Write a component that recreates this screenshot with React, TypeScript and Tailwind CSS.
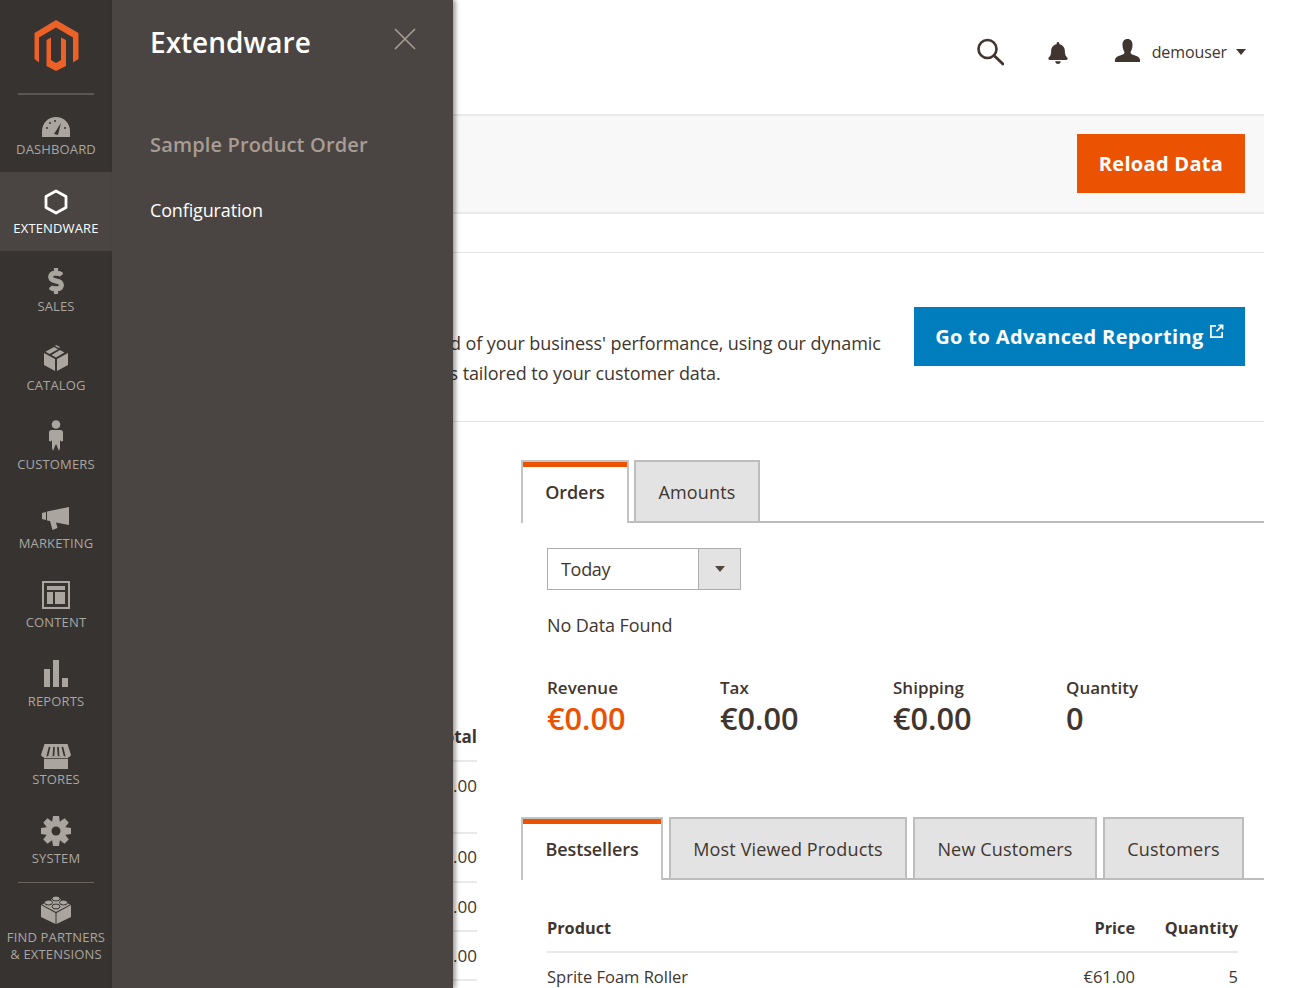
import React from "react";
import { FaDollarSign, FaBell } from "react-icons/fa";

const I = "#aaa69f";

function Item({ icon, label, active }: { icon: React.ReactNode; label: React.ReactNode; active?: boolean }) {
  return (
    <div className={`flex h-[78.8px] flex-col items-center ${active ? "bg-[#4a4542] text-white" : "text-[#aaa6a0]"}`}>
      <div className="flex h-[47.5px] w-full items-end justify-center pb-[2px]">{icon}</div>
      <div className="text-center text-[13px] leading-[17px] tracking-[0.15px] uppercase">{label}</div>
    </div>
  );
}

function Tab({ label, active, w }: { label: string; active?: boolean; w: string }) {
  return active ? (
    <div className={`relative z-10 -mb-[2px] flex h-[63px] flex-col border-x-2 border-t-2 border-[#c4c4c4] bg-white ${w}`}>
      <div className="h-[5px] bg-[#eb5202]" />
      <div className="flex flex-1 items-center justify-center pb-[5px] text-[18px] font-semibold tracking-[-0.1px]">{label}</div>
    </div>
  ) : (
    <div className={`flex h-[61px] items-center justify-center border-2 border-b-0 border-[#bdbdbd] bg-[#e3e3e3] pt-[1px] text-[18px] tracking-[0.15px] ${w}`}>{label}</div>
  );
}

function Stat({ label, value, orange }: { label: string; value: string; orange?: boolean }) {
  return (
    <div className="w-[173px]">
      <div className="text-[17px] leading-[24px] font-semibold">{label}</div>
      <div className={`-mt-[1px] text-[30.700px] leading-[38px] font-semibold ${orange ? "text-[#eb5202]" : ""}`}>{value}</div>
    </div>
  );
}

export default function App() {
  const rows = [
    ["h-[72px] pt-[11px]", "Veronica Costello", "1", "€61.00"],
    ["h-[49px] pt-[10px]", "Roni Cost", "2", "€40.00"],
    ["h-[49px] pt-[11px]", "John Smith", "1", "€22.00"],
    ["h-[49px] pt-[11px]", "Jane Doe", "1", "€36.00"],
  ];
  const teeth = [0, 45, 90, 135, 180, 225, 270, 315];
  return (
    <div className="relative flex h-[988px] w-[1300px] overflow-hidden bg-white text-[#41362f]" style={{ fontFamily: '"Open Sans", sans-serif' }}>
      {/* Sidebar */}
      <nav className="w-[112px] shrink-0 bg-[#373330]">
        <div className="flex h-[93px] flex-col items-center pt-[20px]">
          <svg width="45" height="51" viewBox="0 0 45 51" fill="#ec6125" className="ml-[1px]">
            <path d="M22 0 44.500 13V39L39 42.500V17.500L22 7.500 5 17.500V42.500L0.500 39V13Z" />
            <path d="M12.500 20 17 17.500V40L22 43 27 40V17.500L32 20V46L22 51 12.500 46Z" />
          </svg>
        </div>
        <div className="mx-[18px] h-[2px] bg-[#5a5652]" />
        <div className="-mt-[1.500px]">
          <Item
            label="Dashboard"
            icon={
              <svg width="28" height="20" viewBox="0 0 28 20" className="mb-[2px]">
                <path d="M0 20V14C0 6 6.500 0 14 0S28 6 28 14V20Z" fill={I} />
                <path d="M12 17 19 6 16 18Z" fill="#373330" />
                <g fill="#373330"><circle cx="5" cy="11" r="1" /><circle cx="8" cy="6" r="1" /><circle cx="13" cy="4" r="1" /><circle cx="23" cy="11" r="1" /></g>
              </svg>
            }
          />
          <Item
            active
            label={<span className="font-medium text-[#ffffff]">Extendware</span>}
            icon={
              <svg width="24" height="26" viewBox="0 0 24 26" className="mb-[3px]">
                <path d="M12 2 22 7.500V18.500L12 24 2 18.500V7.500Z" fill="none" stroke="#fff" strokeWidth="2.800" strokeLinejoin="round" />
              </svg>
            }
          />
          <Item
            label={<span className="-mt-[1px] block">Sales</span>}
            icon={<FaDollarSign size={26} color={I} stroke={I} strokeWidth={20} className="mb-[3px]" />}
          />
          <Item
            label="Catalog"
            icon={
              <svg width="24" height="26" viewBox="0 0 24 26" className="mb-[4px]">
                <path d="M0 8 11 14V26L0 20Z" fill={I} />
                <path d="M24 8 13 14V26L24 20Z" fill={I} />
                <path d="M12 12.500 7.500 10 16 5 20.500 7.500Z" fill={I} />
                <path d="M5.500 9 1.500 6.800 10 2 14 4.200Z" fill={I} />
                <path d="M12 0 16 2 14.800 3 11 1Z" fill={I} />
              </svg>
            }
          />
          <Item
            label="Customers"
            icon={
              <svg width="14" height="31" viewBox="0 0 14 31" className="mb-[3px]">
                <circle cx="7" cy="4.500" r="4.300" fill={I} />
                <path d="M2.500 10H11.500C13 10 14 11 14 12.500V21L12 21.500 11 20V28L10 31 7.500 25 7 24 6 26 4 31 3 28V20L2 21.500 0 21V12.500C0 11 1 10 2.500 10Z" fill={I} />
              </svg>
            }
          />
          <Item
            label="Marketing"
            icon={
              <svg width="28" height="23" viewBox="0 0 28 23" className="mb-[3px]">
                <path d="M0 6 4 5V13L0 12Z" fill={I} />
                <path d="M5 4.500 27 0V18L14 15.500 15.500 21 10.500 23 8 14 5 13.500Z" fill={I} />
              </svg>
            }
          />
          <Item
            label="Content"
            icon={
              <svg width="28" height="28" viewBox="0 0 28 28" className="mb-[3px]">
                <rect x="1" y="1" width="26" height="26" fill="none" stroke={I} strokeWidth="2" />
                <rect x="5" y="5" width="18" height="4" fill={I} />
                <rect x="5" y="11" width="6" height="12" fill={I} />
                <rect x="13" y="11" width="10" height="12" fill={I} />
              </svg>
            }
          />
          <Item
            label="Reports"
            icon={
              <svg width="24" height="27" viewBox="0 0 24 27" className="mb-[4px]">
                <rect x="0" y="9" width="6" height="18" fill={I} />
                <rect x="9" y="0" width="6" height="27" fill={I} />
                <rect x="18" y="18" width="6" height="9" fill={I} />
              </svg>
            }
          />
          <Item
            label="Stores"
            icon={
              <svg width="30" height="25" viewBox="0 0 30 25">
                <path d="M3 13H27V25H3Z" fill={I} />
                <path d="M3.500 0H26.500L30 11C29 13.500 26 14 24.500 12.500 23 14 20.500 14 19.500 12.500 18 14 16 14 15 12.500 14 14 12 14 10.500 12.500 9.500 14 7 14 5.500 12.500 4 14 1 13.500 0 11Z" fill={I} />
                <g stroke="#373330" strokeWidth="1.700" strokeLinecap="round">
                  <path d="M8.500 3.500 6.500 11.500" />
                  <path d="M13 3.500 12.500 11.500" />
                  <path d="M17 3.500 17.500 11.500" />
                  <path d="M21.500 3.500 23.500 11.500" />
                </g>
                <path d="M3 14.500H27" stroke="#373330" strokeWidth="0.800" />
              </svg>
            }
          />
          <Item
            label="System"
            icon={
              <svg width="30" height="30" viewBox="0 0 30 30" className="mb-[2px]">
                <g fill={I}>
                  {teeth.map((a) => (
                    <path key={a} d="M12 0H18L19 7H11Z" transform={`rotate(${a} 15 15)`} />
                  ))}
                </g>
                <circle cx="15" cy="15" r="9.500" fill={I} />
                <circle cx="15" cy="15" r="4.500" fill="#373330" />
              </svg>
            }
          />
        </div>
        <div className="mx-[18px] mt-[1px] h-[1px] bg-[#6b645e]" />
        <div className="flex flex-col items-center text-[#aaa6a0]">
          <svg width="30" height="29" viewBox="0 0 30 29" className="mt-[12px]">
            <path d="M0 10 14.500 18V29L0 22Z" fill={I} />
            <path d="M30 10 15.500 18V29L30 22Z" fill={I} />
            <path d="M15 2 29 9.500 15 17 1 9.500Z" fill={I} />
            <g fill={I} stroke="#373330" strokeWidth="1">
              <ellipse cx="15" cy="3.500" rx="4" ry="2.500" />
              <ellipse cx="7.500" cy="7.500" rx="4" ry="2.500" />
              <ellipse cx="22.500" cy="7.500" rx="4" ry="2.500" />
              <ellipse cx="15" cy="11.500" rx="4" ry="2.500" />
            </g>
          </svg>
          <div className="mt-[5px] text-center text-[13px] leading-[17px] tracking-[0.15px] uppercase">Find Partners<br />&amp; Extensions</div>
        </div>
      </nav>

      {/* Main */}
      <main className="w-[1152px] shrink-0">
        <header className="flex h-[114px] items-center justify-end pr-[18px] pb-[11px]">
          <svg width="28" height="28" viewBox="0 0 28 28" className="mr-[43px]" fill="none" stroke="#41362f" strokeWidth="2.600">
            <circle cx="11.500" cy="11" r="9" />
            <path d="M18 17.500 27 26" strokeLinecap="round" strokeWidth="3" />
          </svg>
          <FaBell size={22} color="#41362f" className="mr-[46px] mt-[2px]" />
          <svg width="25" height="23" viewBox="0 0 25 23" className="mr-[12px] mb-[2px]" fill="#41362f">
            <path d="M12.500 0C16 0 17.500 2.500 17.500 6 17.500 9 16.500 11.500 15.500 13 15.500 15 17 15.500 20 16.500 23 17.500 25 18.500 25 21V23H0V21C0 18.500 2 17.500 5 16.500 8 15.500 9.500 15 9.500 13 8.500 11.500 7.500 9 7.500 6 7.500 2.500 9 0 12.500 0Z" />
          </svg>
          <span className="mr-[9px] text-[16px] tracking-[-0.1px]">demouser</span>
          <svg width="10" height="6" viewBox="0 0 10 6" fill="#41362f" className="mt-[1px]"><path d="M0 0H10L5 6Z" /></svg>
        </header>

        <div className="flex h-[100px] items-center justify-end border-y-2 border-[#e9e9e9] bg-[#f8f8f8] pr-[19px] pb-[1px]">
          <div className="flex h-[59px] w-[168px] items-center justify-center bg-[#eb5202] text-[20px] font-bold tracking-[0.3px] text-white">Reload Data</div>
        </div>

        <div className="h-[39px] border-b border-[#e3e3e3]" />

        <section className="flex h-[169px] items-start justify-between border-b border-[#e3e3e3] pr-[19px] pl-[30px]">
          <div className="pt-[75px] text-[18px] leading-[30px] tracking-[-0.09px] whitespace-nowrap">
            <div className="ml-[7.500px]">Gain new insights and take command of your business' performance, using our dynamic</div>
            <div className="ml-[5px]">product, order, and customer reports tailored to your customer data.</div>
          </div>
          <div className="mt-[54px] flex h-[59px] w-[331px] shrink-0 items-center justify-center gap-[6px] bg-[#007dbd] text-[20px] font-bold tracking-[0.37px] text-white">
            <span>Go to Advanced Reporting</span>
            <svg width="14" height="14" viewBox="0 0 15 15" fill="none" stroke="#fff" strokeWidth="1.800" className="mb-[12px]">
              <path d="M6.500 2H1V14H13V8.500" />
              <path d="M9 1.500H13.500V6M13.500 1.500 7 8" />
            </svg>
          </div>
        </section>

        <div className="flex">
          {/* Left column behind the flyout */}
          <div className="ml-[30px] w-[335px] shrink-0 pt-[301px]">
            <div className="flex h-[39px] items-start justify-between border-b-2 border-[#e9e9e9] pt-[1px] text-[17px] font-bold">
              <span>Customer</span><span>Items</span><span>Total</span>
            </div>
            {rows.map((r) => (
              <div key={r[1]} className={`flex items-start justify-between border-b-2 border-[#e9e9e9] text-[17px] leading-[26px] ${r[0]}`}>
                <span>{r[1]}</span><span>{r[2]}</span><span>{r[3]}</span>
              </div>
            ))}
          </div>

          {/* Right column */}
          <div className="ml-[44px] flex-1 pt-[38px]">
            <div className="flex gap-[5px] border-b-2 border-[#bdbdbd]">
              <Tab label="Orders" active w="w-[108px]" />
              <Tab label="Amounts" w="w-[126px]" />
            </div>
            <div className="pl-[26px]">
              <div className="mt-[25px] flex h-[42px] w-[194px] border border-[#adadad]">
                <div className="flex flex-1 items-center pl-[13px] text-[18px] tracking-[-0.3px]">Today</div>
                <div className="flex w-[42px] items-center justify-center border-l border-[#adadad] bg-[#e3e3e3]">
                  <svg width="10" height="6" viewBox="0 0 10 6" fill="#514943"><path d="M0 0H10L5 6Z" /></svg>
                </div>
              </div>
              <div className="mt-[20px] text-[18px] leading-[30px] tracking-[-0.08px]">No Data Found</div>
              <div className="mt-[36px] flex">
                <Stat label="Revenue" value="€0.00" orange />
                <Stat label="Tax" value="€0.00" />
                <Stat label="Shipping" value="€0.00" />
                <Stat label="Quantity" value="0" />
              </div>
            </div>

            <div className="mt-[80px] flex gap-[6px] border-b-2 border-[#bdbdbd]">
              <Tab label="Bestsellers" active w="w-[142px]" />
              <Tab label="Most Viewed Products" w="w-[238px]" />
              <Tab label="New Customers" w="w-[184px]" />
              <Tab label="Customers" w="w-[141px]" />
            </div>
            <div className="mr-[26px] ml-[26px]">
              <div className="mt-[36px] flex h-[37px] border-b-2 border-[#e9e9e9] text-[16.300px] font-bold">
                <span className="flex-1">Product</span>
                <span>Price</span>
                <span className="w-[103px] text-right tracking-[0.1px]">Quantity</span>
              </div>
              <div className="flex pt-[14px] text-[16.500px] leading-[20px]">
                <span className="flex-1">Sprite Foam Roller</span>
                <span>€61.00</span>
                <span className="w-[103px] text-right">5</span>
              </div>
            </div>
          </div>
        </div>
      </main>

      {/* Flyout panel over the page */}
      <aside className="absolute top-0 bottom-0 left-[112px] w-[341px] bg-[#4a4542] pl-[38px] shadow-[3px_0_4px_rgba(0,0,0,0.35)]">
        <div className="absolute top-[28px] right-[37px]">
          <svg width="22" height="22" viewBox="0 0 22 22" stroke="#a79d95" strokeWidth="1.600"><path d="M1 1 21 21M21 1 1 21" /></svg>
        </div>
        <div className="pt-[21px] text-[28px] leading-[42px] font-semibold text-white">Extendware</div>
        <div className="mt-[67px] text-[20px] leading-[30px] font-semibold tracking-[0.15px] text-[#a79d95]">Sample Product Order</div>
        <div className="mt-[37px] text-[18px] leading-[26px] tracking-[-0.15px] text-white">Configuration</div>
      </aside>
    </div>
  );
}
